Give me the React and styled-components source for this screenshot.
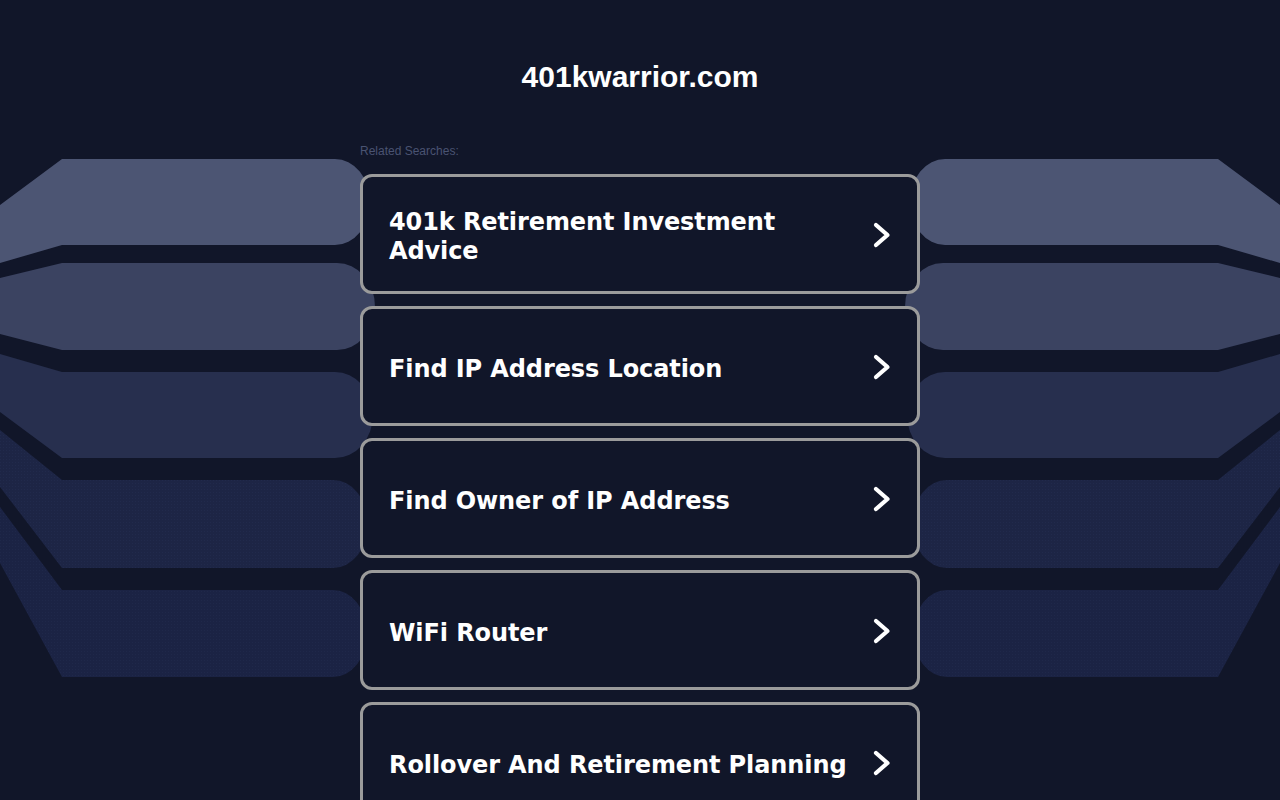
import React from "react"
import styled, { createGlobalStyle } from "styled-components"

const GlobalStyle = createGlobalStyle`
  html, body {
    margin: 0;
    padding: 0;
    background: #111629;
  }
  * {
    box-sizing: border-box;
  }
`

const Page = styled.div`
  position: relative;
  min-height: 100vh;
  overflow: hidden;
  background: #111629;
`

const Backdrop = styled.svg`
  position: absolute;
  top: 0;
  left: 0;
  width: 1280px;
  height: 800px;
  pointer-events: none;
`

const Content = styled.main`
  position: relative;
  width: 560px;
  margin: 0 auto;
  padding-top: 59px;
`

const Title = styled.h1`
  margin: 0;
  font-family: "Liberation Sans", Arial, sans-serif;
  font-size: 30px;
  line-height: 36px;
  font-weight: 700;
  color: #ffffff;
  text-align: center;
`

const Label = styled.div`
  margin-top: 49px;
  font-family: "Liberation Sans", Arial, sans-serif;
  font-size: 12px;
  line-height: 14px;
  color: #4a5372;
`

const List = styled.div`
  display: flex;
  flex-direction: column;
  gap: 12px;
  margin-top: 16px;
`

const Card = styled.a`
  display: flex;
  align-items: center;
  justify-content: space-between;
  gap: 20px;
  height: 120px;
  padding: 0 26px 0 26px;
  border: 3px solid #9b9b9b;
  border-radius: 12px;
  background: #111629;
  color: #ffffff;
  text-decoration: none;
  cursor: pointer;
`

const CardText = styled.span`
  margin-top: 6px;
  font-family: "DejaVu Sans", Verdana, sans-serif;
  font-size: 24px;
  line-height: 29px;
  font-weight: 700;
  letter-spacing: -0.1px;
`

const Chevron = styled.svg`
  flex: none;
  width: 18px;
  height: 26px;
  margin-top: 2px;
`

const bands = [
  { d: "M0,205 L62,159 L335,159 A35,43 0 0 1 335,245 L62,245 L0,263 Z", fill: "#4c5573" },
  { d: "M0,278 L62,263 L337,263 A38,43.5 0 0 1 337,350 L62,350 L0,334 Z", fill: "#3b4361" },
  { d: "M0,354 L62,372 L335,372 A38,43 0 0 1 335,458 L62,458 L0,412 Z", fill: "#272f4e" },
  { d: "M0,430 L62,480 L333,480 A35,44 0 0 1 333,568 L62,568 L0,487 Z", fill: "url(#dotsA)" },
  { d: "M0,507 L62,590 L333,590 A34,43.5 0 0 1 333,677 L62,677 L0,563 Z", fill: "url(#dotsB)" },
]

const searches = [
  "401k Retirement Investment Advice",
  "Find IP Address Location",
  "Find Owner of IP Address",
  "WiFi Router",
  "Rollover And Retirement Planning",
]

const Bands = () => (
  <>
    {bands.map((b, i) => (
      <path key={i} d={b.d} fill={b.fill} />
    ))}
  </>
)

const App = () => {
  return (
    <Page>
      <GlobalStyle />
      <Backdrop viewBox="0 0 1280 800">
        <defs>
          <pattern id="dotsA" width="3" height="3" patternUnits="userSpaceOnUse">
            <rect width="3" height="3" fill="#1d2545" />
            <rect width="1" height="1" fill="#212a4c" />
          </pattern>
          <pattern id="dotsB" width="3" height="3" patternUnits="userSpaceOnUse">
            <rect width="3" height="3" fill="#1b2344" />
            <rect width="1" height="1" fill="#1f284a" />
          </pattern>
        </defs>
        <Bands />
        <g transform="translate(1280,0) scale(-1,1)">
          <Bands />
        </g>
      </Backdrop>
      <Content>
        <Title>401kwarrior.com</Title>
        <Label>Related Searches:</Label>
        <List>
          {searches.map((s) => (
            <Card key={s}>
              <CardText>{s}</CardText>
              <Chevron viewBox="0 0 18 26">
                <polyline
                  points="3,3 14.5,13 3,23"
                  fill="none"
                  stroke="#ffffff"
                  strokeWidth="4.2"
                  strokeLinecap="round"
                  strokeLinejoin="round"
                />
              </Chevron>
            </Card>
          ))}
        </List>
      </Content>
    </Page>
  )
}

export default App
